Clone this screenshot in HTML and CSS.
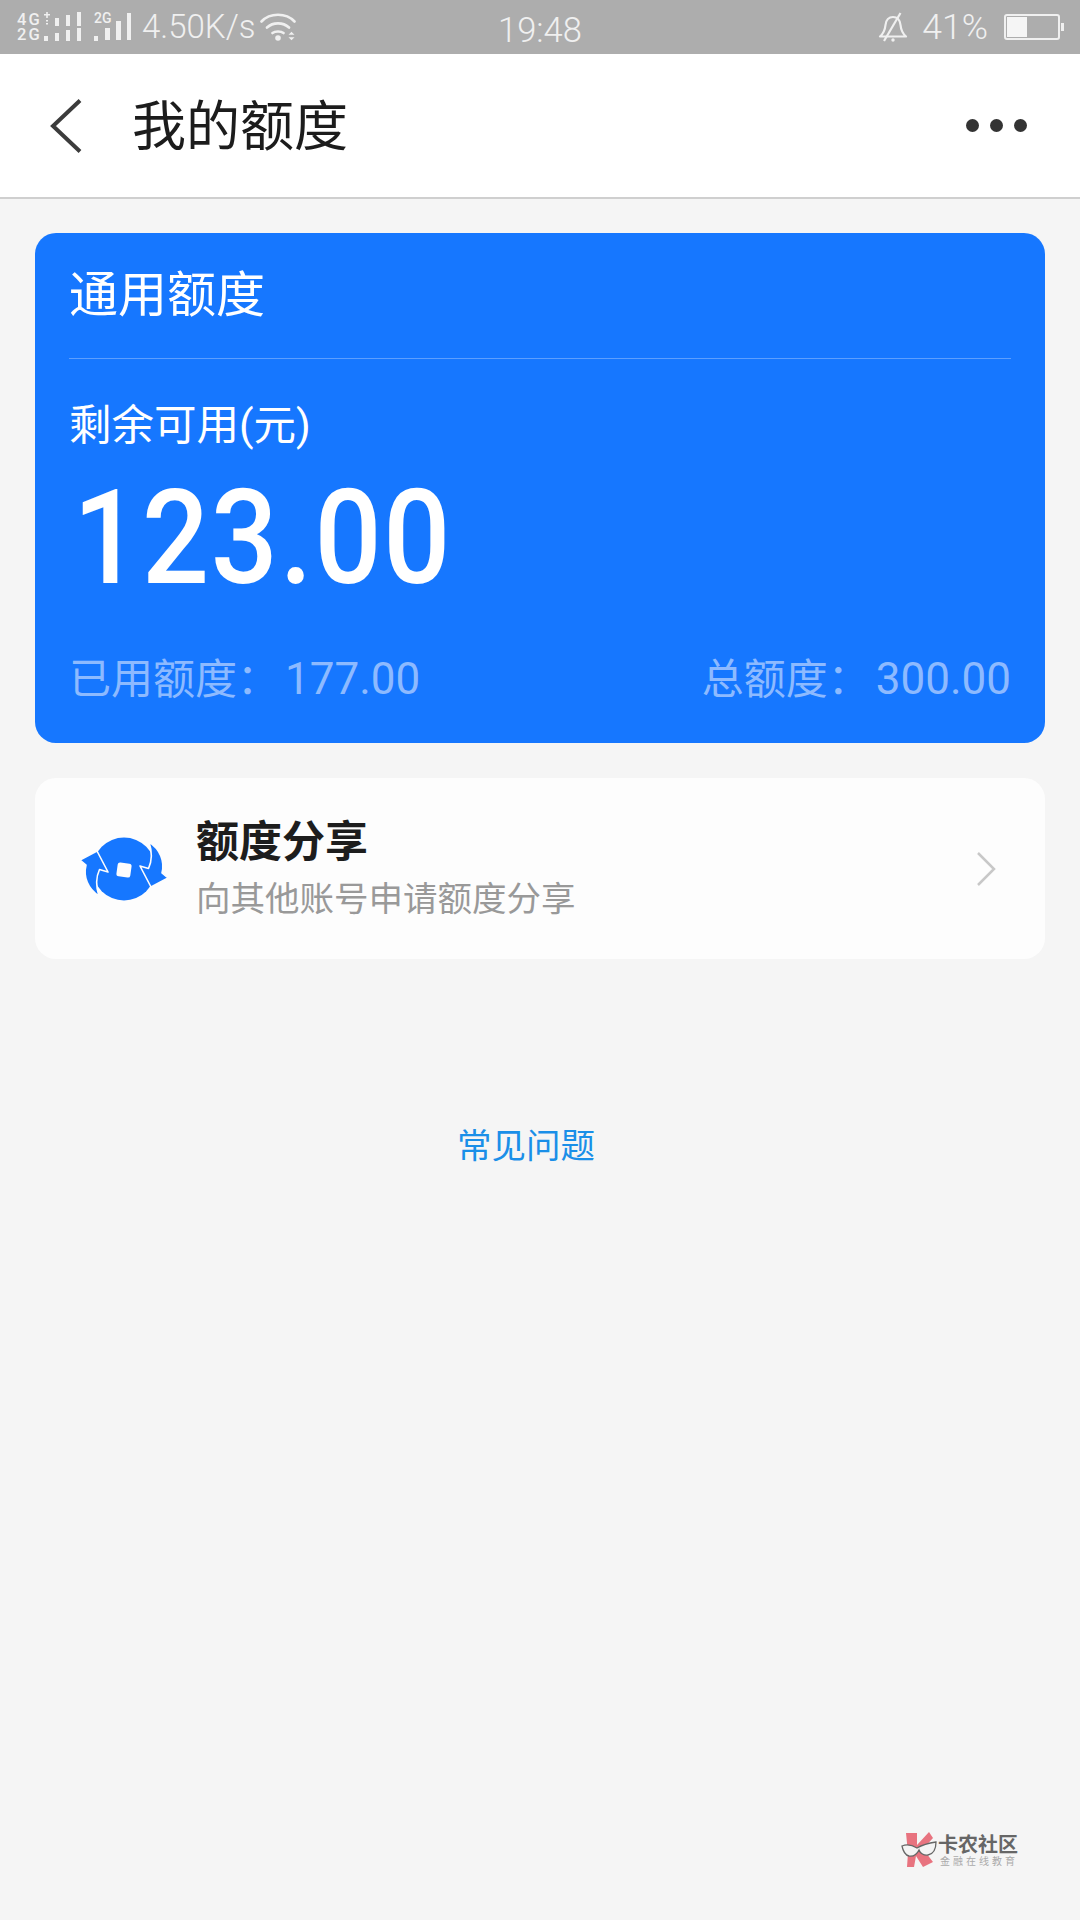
FILE: index.html
```html
<!DOCTYPE html>
<html lang="zh-CN">
<head>
<meta charset="utf-8">
<title>我的额度</title>
<link rel="stylesheet" href="styles.css">
</head>
<body>
<div class="page">
  <div class="status">
    <div class="status-left">
      <div class="sim-stack">
        <div class="sim-row"><span class="net">4G</span><svg class="bars" viewBox="0 0 38 15"><path d="M0 2h6v1.600h-6zM2.200 0h1.600v6h-1.600zM2 8h2v1.500h-2zM2 11h2v1.500h-2z"/><rect x="11" y="6" width="4" height="8"/><rect x="22" y="3" width="4" height="11"/><rect x="33" y="0" width="4" height="14"/></svg></div>
        <div class="sim-row"><span class="net">2G</span><svg class="bars" viewBox="0 0 38 15"><rect x="0" y="9" width="4" height="5"/><rect x="11" y="6" width="4" height="8"/><rect x="22" y="3" width="4" height="11"/><rect x="33" y="1" width="4" height="13"/></svg></div>
      </div>
      <div class="sim-two">
        <svg class="bars-two" viewBox="0 0 38 28"><rect x="0" y="23" width="4" height="5"/><rect x="11" y="15" width="5" height="12"/><rect x="22" y="8" width="5" height="19"/><rect x="33" y="0" width="4" height="27"/></svg>
        <span class="net-two">2G</span>
      </div>
      <span class="speed">4.50K/s</span>
      <svg class="wifi" viewBox="0 0 36 28"><path d="M1.500 8.500C10 -0.500 26 -0.500 34.500 8.500M7 14.500C13 9 23 9 29 14.500M12.500 20C15 18 21 18 23.500 20" fill="none" stroke="#f0f0f0" stroke-width="2.600" stroke-linecap="round"/><circle cx="18" cy="25" r="2.800" fill="#f0f0f0"/><path d="M28.500 21.800l3-3 3 3zM28.500 24.200l3 3 3-3z" fill="#f0f0f0"/></svg>
    </div>
    <span class="clock">19:48</span>
    <div class="status-right">
      <svg class="bell" viewBox="0 0 30 30"><path d="M2 24.500C6 21 7 18 7.500 13C8 8 11 5 15 5C19 5 22 8 22.500 13C23 18 24 21 28 24.500Z" fill="none" stroke="#f0f0f0" stroke-width="2.200" stroke-linejoin="round"/><path d="M6 29L22.500 1" stroke="#f0f0f0" stroke-width="2.200"/><circle cx="15" cy="28" r="1.700" fill="#f0f0f0"/></svg>
      <span class="percent">41%</span>
      <div class="battery"><div class="battery-body"><div class="battery-fill"></div></div><div class="battery-tip"></div></div>
    </div>
  </div>

  <header class="nav">
    <svg class="back" viewBox="0 0 34 54"><path d="M31 1.500L4 27L31 52.500" fill="none" stroke="#3c3c3c" stroke-width="4"/></svg>
    <h1 class="nav-title">我的额度</h1>
    <div class="dots"><i></i><i></i><i></i></div>
  </header>

  <main class="content">
    <section class="quota">
      <div class="quota-title">通用额度</div>
      <div class="quota-body">
        <div class="remain-label">剩余可用(元)</div>
        <div class="remain-value">123.00</div>
        <div class="quota-foot">
          <span>已用额度：<span class="amount">177.00</span></span>
          <span>总额度：<span class="amount">300.00</span></span>
        </div>
      </div>
    </section>

    <section class="share">
      <svg class="share-icon" viewBox="0 0 88 68">
        <circle cx="44" cy="34" r="31.500" fill="#1677ff"/>
        <path d="M0 25L17 16L28 37L19.500 34.500C16 42 16 52 19 61C8 54 3 42 6 30Z" fill="#1677ff" stroke="#fdfdfd" stroke-width="1.600" stroke-linejoin="round"/>
        <path d="M88 43L71 52L60 31L68.500 33.500C72 26 72 16 69 7C80 14 85 26 82 38Z" fill="#1677ff" stroke="#fdfdfd" stroke-width="1.600" stroke-linejoin="round"/>
        <rect x="37" y="28" width="14" height="14" rx="2.500" fill="#fdfdfd" transform="rotate(8 44 35)"/>
      </svg>
      <div class="share-text">
        <div class="share-title">额度分享</div>
        <div class="share-sub">向其他账号申请额度分享</div>
      </div>
      <svg class="chevron" viewBox="0 0 20 36"><path d="M2 2L18 18L2 34" fill="none" stroke="#c8c8c8" stroke-width="2.500"/></svg>
    </section>

    <a class="faq">常见问题</a>
  </main>

  <div class="mark">
    <svg class="mark-icon" viewBox="0 0 36 36">
      <path d="M5 1H16V13L28 0L32 6L22 17L32 30L22 35L15 24L13 35H6L7 21Z" fill="#e8737f"/>
      <path d="M1 14C6 12 11 13 16 16C21 13 28 11 35 10C35 17 32 22 27 23C23 24 19 21 18 18C16 22 13 25 8 24C4 23 2 19 1 14Z" fill="#f4f4f4" stroke="#666" stroke-width="1.300"/>
    </svg>
    <div class="mark-text">
      <span class="mark-name">卡农社区</span>
      <span class="mark-sub">金融在线教育</span>
    </div>
  </div>
</div>
</body>
</html>
```
FILE: styles.css
```css
* { box-sizing: border-box; }
html, body { margin: 0; padding: 0; }
body {
  width: 1080px;
  height: 1920px;
  overflow: hidden;
  background: #f5f5f5;
  font-family: "Noto Sans CJK SC", "Noto Sans", sans-serif;
}
.page { position: relative; width: 1080px; height: 1920px; display: flex; flex-direction: column; }

.status {
  position: relative;
  height: 54px;
  background: #adadad;
  color: #f0f0f0;
  display: flex;
  align-items: center;
  justify-content: space-between;
  padding: 0 16px 0 17px;
  font-family: Roboto, sans-serif;
}
.status-left { display: flex; align-items: center; }
.sim-stack { width: 65px; display: flex; flex-direction: column; }
.sim-row { display: flex; align-items: center; height: 15px; }
.net { font-size: 16.500px; font-weight: 500; line-height: 15px; width: 27px; letter-spacing: 2px; }
.bars { width: 38px; height: 15px; fill: #f0f0f0; }
.sim-two { position: relative; width: 38px; height: 28px; margin-left: 12px; }
.net-two { position: absolute; left: 0; top: -1px; font-size: 14px; line-height: 12px; font-weight: 500; }
.bars-two { width: 38px; height: 28px; fill: #f0f0f0; display: block; }
.speed { font-size: 33px; line-height: 58px; margin-left: 10px; font-weight: 300; }
.wifi { width: 36px; height: 28px; margin-left: 4px; }
.clock {
  position: absolute;
  left: 498px;
  top: 0;
  font-size: 34.500px;
  line-height: 60px;
  font-weight: 300;
}
.status-right { display: flex; align-items: center; }
.bell { width: 30px; height: 30px; margin-right: 14px; }
.percent { font-size: 35.500px; line-height: 58px; font-weight: 300; margin-right: 16px; }
.battery { display: flex; align-items: center; }
.battery-body { width: 56px; height: 26px; border: 2px solid #f0f0f0; border-radius: 3px; padding: 1px; }
.battery-fill { width: 20px; height: 100%; background: #f5f5f5; }
.battery-tip { width: 3px; height: 8px; background: #f0f0f0; margin-left: 1px; }

.nav {
  height: 145px;
  background: #fff;
  border-bottom: 2px solid #cfcfcf;
  display: flex;
  align-items: center;
  padding: 0 53px 0 49px;
}
.back { width: 34px; height: 54px; }
.nav-title {
  margin: 0 0 5px 49px;
  font-size: 54px;
  font-weight: 400;
  color: #1c1c1c;
  line-height: 70px;
  flex: 1;
}
.dots { display: flex; gap: 11px; }
.dots i { display: block; width: 13px; height: 13px; border-radius: 50%; background: #333; }

.content { display: flex; flex-direction: column; padding: 34px 35px 0; }
.quota {
  height: 510px;
  background: #1677ff;
  border-radius: 21px;
  padding: 0 34px;
  color: #fff;
}
.quota-title {
  height: 126px;
  border-bottom: 1px solid #5c9fff;
  font-size: 49px;
  line-height: 116px;
}
.quota-body { display: flex; flex-direction: column; }
.remain-label { margin-top: 37px; font-family: Roboto, "Noto Sans CJK SC", sans-serif; font-size: 42.500px; line-height: 60px; }
.remain-value {
  font-family: Roboto, sans-serif;
  font-weight: 500;
  font-size: 132px;
  line-height: 120px;
  margin: 22px 0 0 4px;
  letter-spacing: 2px;
  transform: scaleX(0.895);
  transform-origin: left center;
}
.quota-foot {
  display: flex;
  justify-content: space-between;
  margin-top: 51px;
  font-family: Roboto, "Noto Sans CJK SC", sans-serif;
  font-size: 42px;
  line-height: 60px;
  color: #8dbaff;
}
.amount { margin-left: 6px; font-size: 44px; }
.share {
  margin-top: 35px;
  height: 181px;
  background: #fdfdfd;
  border-radius: 21px;
  display: flex;
  align-items: center;
  padding: 0 49px 0 45px;
}
.share-icon { width: 88px; height: 68px; flex: none; overflow: visible; }
.share-text { flex: 1; margin-left: 28px; margin-bottom: 10px; }
.share-title { font-size: 43px; font-weight: 700; line-height: 60px; color: #1d1d1d; }
.share-sub { font-size: 34.500px; line-height: 46px; color: #999; margin-top: 5px; }
.chevron { width: 20px; height: 36px; }
.faq {
  align-self: flex-start;
  margin: 159px 0 0 422px;
  font-size: 34.500px;
  line-height: 50px;
  color: #1a8fe8;
}

.mark {
  position: absolute;
  left: 901px;
  top: 1832px;
  display: flex;
  align-items: center;
  gap: 1px;
}
.mark-icon { width: 36px; height: 36px; }
.mark-text { display: flex; flex-direction: column; }
.mark-name { font-size: 20px; line-height: 21px; font-weight: 700; color: #666; }
.mark-sub { font-size: 10px; line-height: 14px; color: #aaa; letter-spacing: 3px; margin-left: 2px; }
```
